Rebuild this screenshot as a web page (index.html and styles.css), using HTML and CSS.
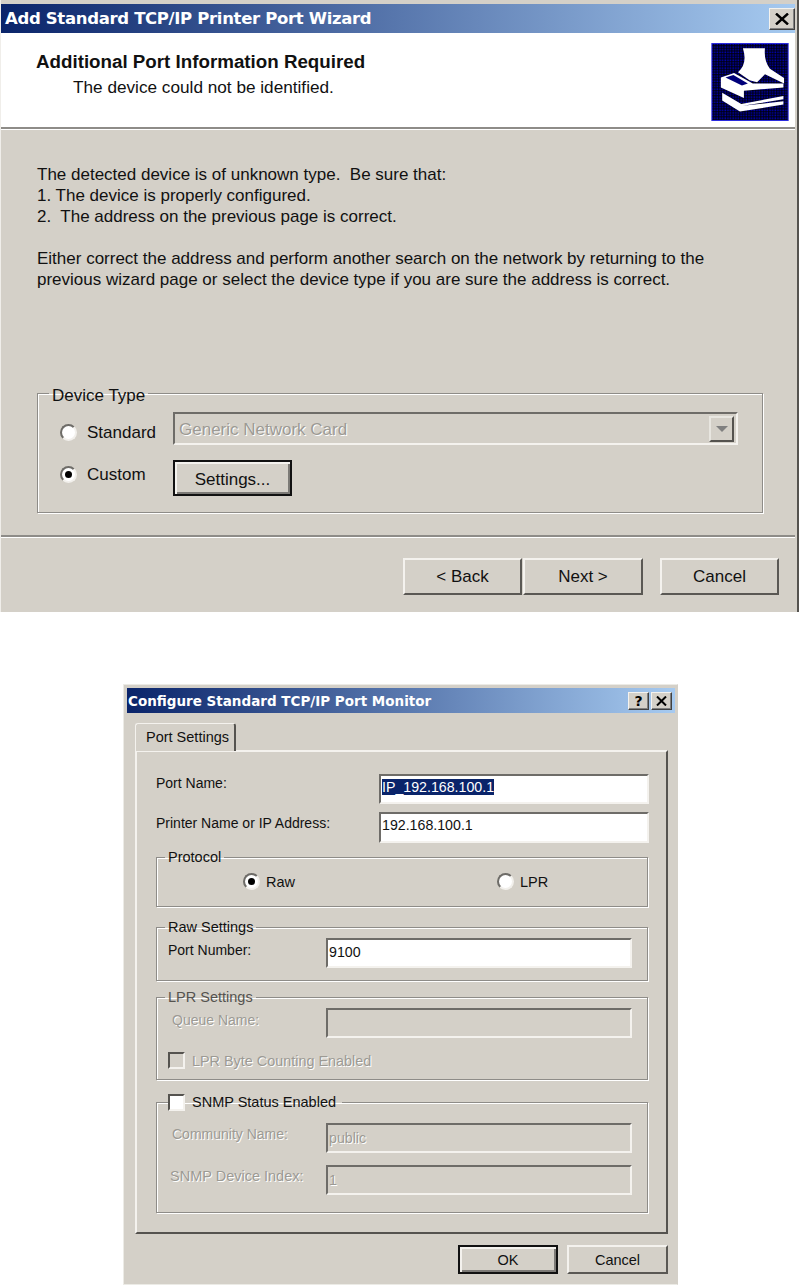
FILE: index.html
```html
<!DOCTYPE html>
<html lang="en">
<head>
    <meta charset="UTF-8">
    <meta name="viewport" content="width=device-width, initial-scale=1.0">
    <title>TCP/IP Printer Port</title>
    <link rel="stylesheet" href="styles.css">
</head>
<body>

    <!-- Wizard window -->
    <div class="wizard">
        <div class="titlebar wizard-title">
            <span class="title-text">Add Standard TCP/IP Printer Port Wizard</span>
            <div class="cap-btn big">
                <svg width="14" height="12" viewBox="0 0 14 12"><path d="M1 0.5 L13 11.5 M13 0.5 L1 11.5" stroke="#000" stroke-width="2.4"/></svg>
            </div>
        </div>

        <div class="wizard-head">
            <div class="head-text">
                <h1>Additional Port Information Required</h1>
                <p>The device could not be identified.</p>
            </div>
            <svg class="head-icon" width="78" height="78" viewBox="329 127 235 237">
                <defs>
                    <pattern id="dither" width="8" height="8" patternUnits="userSpaceOnUse">
                        <rect width="8" height="8" fill="#000"/>
                        <rect x="1" y="1" width="5" height="5" fill="#0000b4"/>
                    </pattern>
                </defs>
                <rect x="329" y="127" width="235" height="237" fill="#2a2ae0"/>
                <rect x="332" y="130" width="229" height="231" fill="url(#dither)"/>
                <path d="M425 143 L492 143 Q488 180 507 205 L550 233 L550 250 L492 222 L468 246 L445 240 L410 216 Q440 190 425 143 Z" fill="#fff"/>
                <path d="M358 232 L398 218 L455 250 L548 250 L548 262 L428 272 L428 294 L358 262 Z" fill="#fff"/>
                <path d="M372 232 L396 224 L440 250 L422 256 Z" fill="#00007a"/>
                <path d="M362 278 L420 312 L548 288 L548 298 L424 318 L548 304 L548 314 L416 335 L362 302 Z" fill="#fff"/>
            </svg>
        </div>

        <div class="wizard-body">
            <p>The detected device is of unknown type.&nbsp; Be sure that:<br>1. The device is properly configured.<br>2.&nbsp; The address on the previous page is correct.</p>
            <p>Either correct the address and perform another search on the network by returning to the<br>previous wizard page or select the device type if you are sure the address is correct.</p>

            <fieldset class="group device-type">
                <legend>Device Type</legend>
                <div class="device-grid">
                    <label class="choice lower"><span class="radio"></span>Standard</label>
                    <div class="field combo">
                        <span class="disabled-text">Generic Network Card</span>
                        <span class="combo-btn"><span class="arrow"></span></span>
                    </div>
                    <label class="choice upper"><span class="radio on"></span>Custom</label>
                    <div class="btn default settings-btn">Settings...</div>
                </div>
            </fieldset>
        </div>

        <div class="separator"></div>

        <div class="wizard-actions">
            <div class="btn">&lt; Back</div>
            <div class="btn next-btn">Next &gt;</div>
            <div class="btn cancel-btn">Cancel</div>
        </div>
    </div>

    <!-- Port monitor dialog -->
    <div class="dialog">
        <div class="titlebar dialog-title">
            <span class="title-text">Configure Standard TCP/IP Port Monitor</span>
            <div class="cap-group">
                <div class="cap-btn">?</div>
                <div class="cap-btn">
                    <svg width="11" height="10" viewBox="0 0 11 10"><path d="M1 0.5 L10 9.5 M10 0.5 L1 9.5" stroke="#000" stroke-width="2"/></svg>
                </div>
            </div>
        </div>

        <div class="tab">Port Settings</div>
        <div class="panel">
            <div class="port-grid">
                <span class="form-label top-label">Port Name:</span>
                <div class="field white"><span class="selected">IP_192.168.100.1</span></div>
                <span class="form-label">Printer Name or IP Address:</span>
                <div class="field white">192.168.100.1</div>
            </div>

            <fieldset class="group protocol">
                <legend>Protocol</legend>
                <div class="protocol-row">
                    <label class="choice small raw-choice"><span class="radio on"></span>Raw</label>
                    <label class="choice small"><span class="radio"></span>LPR</label>
                </div>
            </fieldset>

            <fieldset class="group raw-settings">
                <legend>Raw Settings</legend>
                <div class="form-row">
                    <span class="form-label">Port Number:</span>
                    <div class="field white wide">9100</div>
                </div>
            </fieldset>

            <fieldset class="group lpr-settings">
                <legend class="disabled-legend">LPR Settings</legend>
                <div class="form-row">
                    <span class="form-label disabled-text indent">Queue Name:</span>
                    <div class="field wide"></div>
                </div>
                <label class="check-row disabled-text"><span class="check off"></span>LPR Byte Counting Enabled</label>
            </fieldset>

            <fieldset class="group snmp">
                <legend><span class="check"></span>SNMP Status Enabled</legend>
                <div class="form-row">
                    <span class="form-label disabled-text indent">Community Name:</span>
                    <div class="field wide disabled-text">public</div>
                </div>
                <div class="form-row second">
                    <span class="form-label disabled-text indent-small">SNMP Device Index:</span>
                    <div class="field wide disabled-text">1</div>
                </div>
            </fieldset>
        </div>

        <div class="dialog-actions">
            <div class="btn default ok-btn">OK</div>
            <div class="btn cancel-small">Cancel</div>
        </div>
    </div>

</body>
</html>
```

FILE: styles.css
```css
/* General reset */
* {
    margin: 0;
    padding: 0;
    box-sizing: border-box;
    font-family: "Liberation Sans", Arial, sans-serif;
}

body {
    background-color: #fff;
    width: 801px;
    height: 1285px;
    overflow: hidden;
    color: #111;
}

/* Title bars */
.titlebar {
    display: flex;
    justify-content: space-between;
    align-items: center;
    background: linear-gradient(to right, #0a246a, #a6caf0);
    color: #fff;
}

.title-text {
    font-family: "DejaVu Sans", sans-serif;
    font-weight: bold;
}

.cap-btn {
    width: 21px;
    height: 18px;
    display: flex;
    justify-content: center;
    align-items: center;
    background-color: #d4d0c8;
    border: 1px solid;
    border-color: #f4f2ee #404040 #404040 #f4f2ee;
    box-shadow: inset -1px -1px 0 #808080;
    color: #000;
    font-family: "DejaVu Sans", sans-serif;
    font-weight: bold;
    font-size: 14px;
}

.cap-btn.big {
    width: 26px;
    height: 22px;
}

.cap-group {
    display: flex;
    gap: 2px;
}

/* Wizard */
.wizard {
    width: 799px;
    height: 612px;
    padding-top: 4px;
    background-color: #d4d0c8;
    border-left: 1px solid #f0eeea;
    border-right: 2px solid #55534f;
    padding-right: 2px;
}

.wizard-title {
    height: 29px;
    padding: 0 0 0 4px;
}

.wizard-title .title-text {
    font-size: 16.5px;
    letter-spacing: -0.33px;
}

.wizard-head {
    display: flex;
    justify-content: space-between;
    align-items: flex-start;
    height: 96px;
    padding: 10px 6px 0 35px;
    background-color: #fff;
    border-bottom: 2px solid #8e8c88;
    box-shadow: 0 1px 0 #fff;
}

.head-text h1 {
    margin-top: 7px;
    font-size: 18.75px;
    line-height: 24px;
}

.head-text p {
    padding: 1px 0 0 37px;
    font-size: 17.2px;
    line-height: 24px;
}

.wizard-body {
    padding: 35px 0 0 36px;
    font-size: 17px;
    line-height: 21px;
}

.wizard-body p {
    margin-bottom: 21px;
}

/* Group boxes */
.group {
    border: 1px solid #8e8c88;
    box-shadow: 1px 1px 0 #fff, inset 1px 1px 0 #fff;
}

.group legend {
    margin-left: -3px;
    padding: 0 3px;
    font-size: 14.5px;
    line-height: 18px;
}

.device-type {
    width: 726px;
    margin-top: 90px;
    padding: 6px 0 16px 22px;
}

.device-type legend {
    margin-left: -11px;
    padding: 6px 3px 0;
    font-size: 17px;
    line-height: 20px;
}

.device-grid {
    display: grid;
    grid-template-columns: 113px 565px;
    grid-template-rows: 33px 36px;
    row-gap: 15px;
}

.choice {
    display: flex;
    align-items: center;
    gap: 10px;
    font-size: 17px;
}

.choice.lower {
    padding-top: 7px;
}

.choice.upper {
    padding-bottom: 8px;
}

.choice.small {
    gap: 6px;
    font-size: 14.5px;
}

.radio {
    position: relative;
    flex: none;
    width: 17px;
    height: 17px;
    background-color: #fff;
    border: 2px solid;
    border-color: #6e6c68 #f2f0ec #f2f0ec #6e6c68;
    border-radius: 50%;
}

.radio.on::after {
    content: "";
    position: absolute;
    left: 3px;
    top: 3px;
    width: 7px;
    height: 7px;
    background-color: #000;
    border-radius: 50%;
}

.field {
    height: 30px;
    padding: 1px 1px 0;
    border: 2px solid;
    border-color: #6e6c68 #f4f2ee #f4f2ee #6e6c68;
    font-size: 14.2px;
    line-height: 20px;
    white-space: nowrap;
}

.field.white {
    background-color: #fff;
}

.field.wide {
    width: 306px;
}

.raw-settings .field {
    padding-top: 2px;
}

.snmp .field {
    padding-top: 3px;
}

.combo {
    display: flex;
    justify-content: space-between;
    align-items: center;
    height: 33px;
    padding: 0 2px 0 4px;
    font-size: 17px;
}

.combo .disabled-text {
    padding-top: 3px;
}

.combo-btn {
    display: flex;
    justify-content: center;
    align-items: center;
    width: 25px;
    height: 26px;
    border: 2px solid;
    border-color: #e8e6e0 #55534f #55534f #e8e6e0;
}

.arrow {
    border-style: solid;
    border-width: 6px 6px 0;
    border-color: #808080 transparent transparent;
}

.disabled-text {
    color: #9c9a94;
    text-shadow: 1px 1px 0 #fff;
}

.btn {
    display: flex;
    justify-content: center;
    align-items: center;
    width: 119px;
    height: 37px;
    border: 2px solid;
    border-color: #f4f2ee #5a5854 #5a5854 #f4f2ee;
    font-size: 17px;
}

.btn.default {
    border-color: #111;
    box-shadow: inset 2px 2px 0 #f4f2ee, inset -2px -2px 0 #7c7a76;
}

.settings-btn {
    height: 36px;
    padding-top: 2px;
}

.separator {
    height: 2px;
    margin-top: 22px;
    background-color: #8e8c88;
    box-shadow: 0 1px 0 #fff;
}

.wizard-actions {
    display: flex;
    justify-content: flex-end;
    gap: 1px;
    padding: 21px 16px 0 0;
}

.next-btn {
    width: 120px;
}

.cancel-btn {
    margin-left: 16px;
}

/* Dialog */
.dialog {
    width: 555px;
    height: 601px;
    margin: 72px 0 0 123px;
    padding: 3px 2px 0 3px;
    background-color: #d4d0c8;
    border: 1px solid #ecebe6;
    border-right-color: #d4d0c8;
}

.dialog-title {
    height: 25px;
    padding: 0 3px 0 1px;
}

.dialog-title .title-text {
    font-size: 13.5px;
}

.tab {
    position: relative;
    z-index: 1;
    width: 101px;
    height: 28px;
    margin: 10px 0 0 8px;
    padding: 3px 0 0 10px;
    background-color: #d4d0c8;
    border: 1px solid #f4f2ee;
    border-right: 2px solid #55534f;
    border-bottom: none;
    border-radius: 3px 3px 0 0;
    font-size: 14.5px;
    line-height: 20px;
}

.panel {
    width: 533px;
    height: 484px;
    margin: -1px 0 0 8px;
    padding: 22px 0 0 19px;
    border: 2px solid;
    border-color: #f4f2ee #55534f #55534f #f4f2ee;
    font-size: 14.5px;
}

.port-grid {
    display: grid;
    grid-template-columns: 223px 270px;
    grid-template-rows: 30px 31px;
    row-gap: 8px;
    align-items: center;
}

.port-grid .field {
    height: 100%;
}

.form-label {
    padding-bottom: 9px;
    font-size: 14px;
}

.form-label.top-label {
    padding-bottom: 13px;
}

.form-row .form-label {
    padding-bottom: 6px;
}

.snmp .form-row .form-label {
    padding-bottom: 9px;
}

.selected {
    background-color: #0a246a;
    color: #fff;
}

.panel .group {
    width: 492px;
}

.protocol {
    height: 59px;
    margin-top: 5px;
    padding: 7px 0 0 11px;
}

.protocol-row {
    display: flex;
    padding-left: 75px;
}

.raw-choice {
    width: 254px;
}

.raw-settings {
    height: 63px;
    margin-top: 11px;
    padding: 2px 0 0 11px;
}

.form-row {
    display: grid;
    grid-template-columns: 158px 306px;
    align-items: center;
}

.form-row.second {
    margin-top: 12px;
}

.indent {
    padding-left: 4px;
}

.indent-small {
    padding-left: 2px;
    font-size: 14.5px;
}

.lpr-settings {
    height: 92px;
    margin-top: 7px;
    padding: 2px 0 0 11px;
}

.disabled-legend {
    color: #55534f;
}

.check-row {
    display: flex;
    align-items: center;
    gap: 7px;
    margin-top: 14px;
    font-size: 14.4px;
}

.check {
    display: inline-block;
    flex: none;
    width: 17px;
    height: 17px;
    background-color: #fff;
    border: 2px solid;
    border-color: #55534f #f4f2ee #f4f2ee #55534f;
}

.check.off {
    background-color: #d4d0c8;
}

.snmp {
    height: 120px;
    margin-top: 13px;
    padding: 12px 0 0 11px;
}

.snmp legend {
    display: flex;
    align-items: center;
    gap: 7px;
    margin-left: 0;
    padding: 0 6px 0 0;
    font-size: 14.5px;
}

.dialog-actions {
    display: flex;
    justify-content: flex-end;
    gap: 9px;
    padding: 11px 7px 0 0;
}

.dialog-actions .btn {
    width: 101px;
    height: 29px;
    font-size: 14.5px;
}

.dialog-actions .ok-btn {
    width: 100px;
}
```
